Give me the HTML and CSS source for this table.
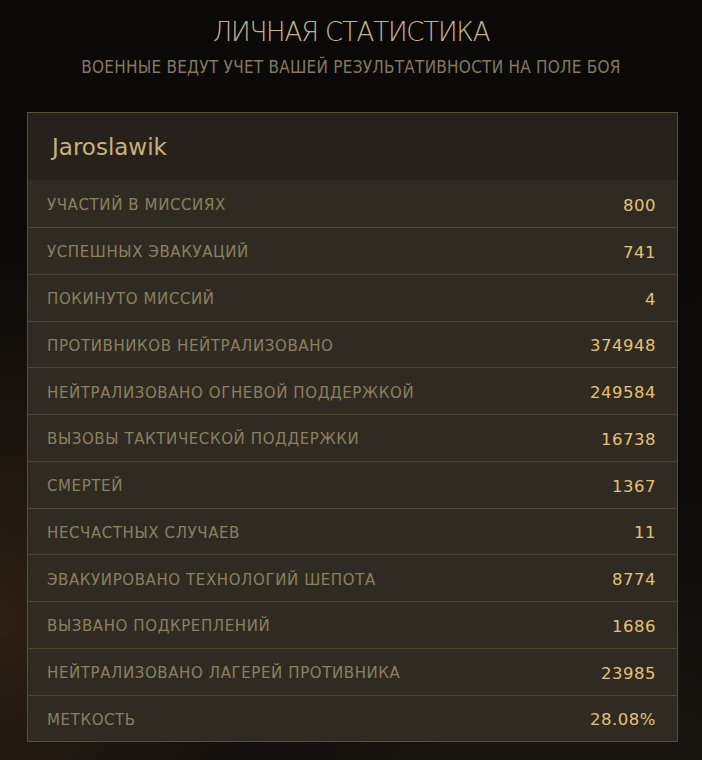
FILE: index.html
```html
<!DOCTYPE html>
<html>
<head lang="ru">
    <meta charset="UTF-8">
    <title>Личная статистика</title>
    <link rel="stylesheet" href="styles.css">
</head>
<body>
    <div class="page">
        <h1 class="title">ЛИЧНАЯ СТАТИСТИКА</h1>
        <p class="subtitle">ВОЕННЫЕ ВЕДУТ УЧЕТ ВАШЕЙ РЕЗУЛЬТАТИВНОСТИ НА ПОЛЕ БОЯ</p>

        <div class="card">
            <div class="card-head">Jaroslawik</div>
            <ul class="stats">
                <li><span class="name">УЧАСТИЙ В МИССИЯХ</span><span class="val">800</span></li>
                <li><span class="name">УСПЕШНЫХ ЭВАКУАЦИЙ</span><span class="val">741</span></li>
                <li><span class="name">ПОКИНУТО МИССИЙ</span><span class="val">4</span></li>
                <li><span class="name">ПРОТИВНИКОВ НЕЙТРАЛИЗОВАНО</span><span class="val">374948</span></li>
                <li><span class="name">НЕЙТРАЛИЗОВАНО ОГНЕВОЙ ПОДДЕРЖКОЙ</span><span class="val">249584</span></li>
                <li><span class="name">ВЫЗОВЫ ТАКТИЧЕСКОЙ ПОДДЕРЖКИ</span><span class="val">16738</span></li>
                <li><span class="name">СМЕРТЕЙ</span><span class="val">1367</span></li>
                <li><span class="name">НЕСЧАСТНЫХ СЛУЧАЕВ</span><span class="val">11</span></li>
                <li><span class="name">ЭВАКУИРОВАНО ТЕХНОЛОГИЙ ШЕПОТА</span><span class="val">8774</span></li>
                <li><span class="name">ВЫЗВАНО ПОДКРЕПЛЕНИЙ</span><span class="val">1686</span></li>
                <li><span class="name">НЕЙТРАЛИЗОВАНО ЛАГЕРЕЙ ПРОТИВНИКА</span><span class="val">23985</span></li>
                <li><span class="name">МЕТКОСТЬ</span><span class="val">28.08%</span></li>
            </ul>
        </div>
    </div>
</body>
</html>
```

FILE: styles.css
```css
*{
    margin: 0px;
    padding: 0px;
    box-sizing: border-box;
}
html,body{
    height: 100%;
}
body{
    background-color: #0b0a08;
    background-image:
        radial-gradient(ellipse 260px 360px at 0px 620px, rgba(70,48,30,0.55), rgba(0,0,0,0)),
        radial-gradient(ellipse 500px 300px at 560px 780px, rgba(40,34,26,0.5), rgba(0,0,0,0)),
        linear-gradient(#0a0907, #0e0c0a);
    font-family: "DejaVu Sans", sans-serif;
    overflow: hidden;
}
.page{
    padding-top: 16px;
}
.title{
    text-align: center;
    font-family: "DejaVu Sans", sans-serif;
    font-stretch: condensed;
    font-weight: 200;
    font-size: 26px;
    line-height: 32px;
    letter-spacing: -1.2px;
    color: #c6b48c;
}
.subtitle{
    margin-top: 8px;
    text-align: center;
    font-family: "DejaVu Sans", sans-serif;
    font-stretch: condensed;
    font-size: 17px;
    line-height: 22px;
    letter-spacing: 0.25px;
    color: #85795e;
}
.card{
    margin: 34px 0px 0px 27px;
    width: 651px;
    border: 1px solid #55503a;
    background-color: #2d2920;
}
.card-head{
    height: 67px;
    padding-left: 24px;
    padding-top: 1px;
    line-height: 67px;
    font-size: 23px;
    color: #c9b27c;
    background-color: #26221b;
}
.stats{
    list-style: none;
}
.stats li{
    display: flex;
    justify-content: space-between;
    align-items: center;
    height: 46.75px;
    padding: 3px 21px 0px 19px;
    border-top: 1px solid #4b4532;
    background-color: #2f2b22;
}
.stats li:first-child{
    border-top: none;
    height: 47px;
    padding-top: 3px;
}
.name{
    font-size: 15px;
    letter-spacing: 0.6px;
    color: #8c805f;
}
.val{
    font-size: 16.5px;
    letter-spacing: 0.5px;
    color: #e6c073;
}
```
